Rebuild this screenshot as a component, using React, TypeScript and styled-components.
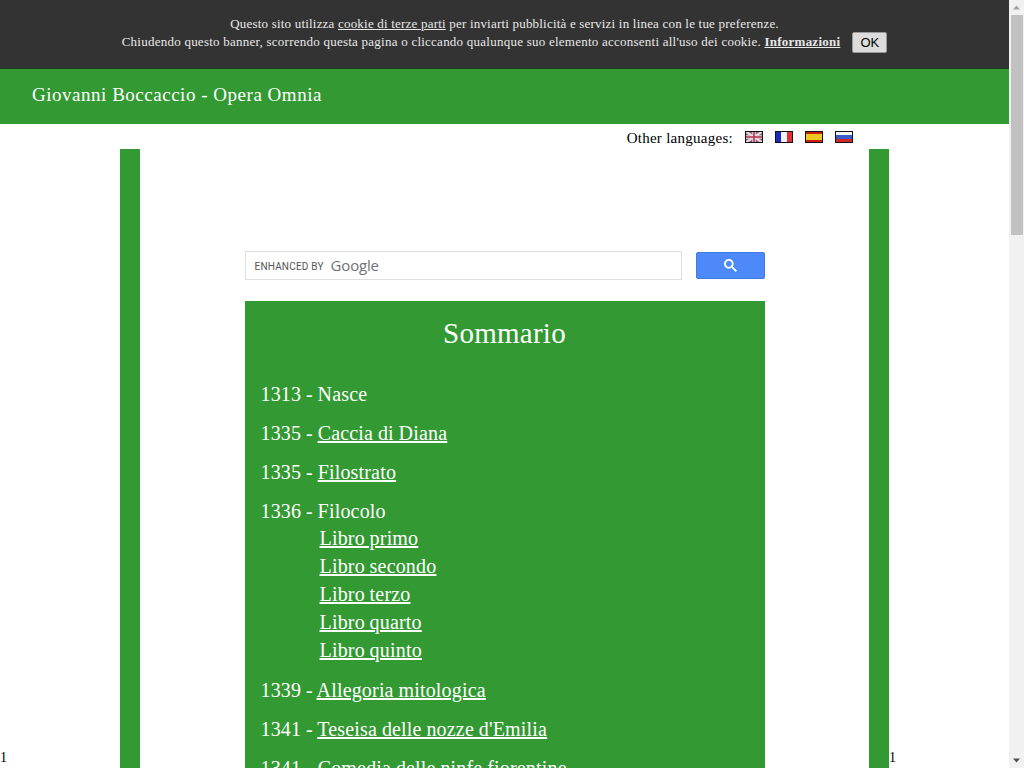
import React from "react";
import styled, { createGlobalStyle } from "styled-components";

const Global = createGlobalStyle`
  html { scrollbar-width: none; }
  body { margin: 0; background: #fff; color: #000; font-family: "Liberation Serif", serif; font-size: 16px; }
`;

const Page = styled.div`
  margin-right: 15px;
`;
const ScrollRail = styled.div`
  position: fixed;
  top: 0;
  right: 0;
  bottom: 0;
  width: 15px;
  background: #f1f1f1;
  display: flex;
  flex-direction: column;
  justify-content: space-between;
`;
const ScrollArrow = styled.svg`
  width: 15px;
  height: 15px;
  display: block;
`;
const ScrollThumb = styled.div`
  position: absolute;
  top: 15px;
  left: 2px;
  width: 12px;
  height: 220px;
  background: #c1c1c1;
`;
const Banner = styled.div`
  height: 54px;
  padding-top: 14px;
  background: #333;
  border-bottom: 1px solid #1d3d1b;
  color: #e8e8e8;
  text-align: center;
  font-size: 13px;
  line-height: 19px;
  letter-spacing: 0.2px;
  a { color: inherit; text-decoration: underline; }
`;
const BannerLine = styled.div`
  margin-top: -1px;
  letter-spacing: 0.24px;
`;
const OkButton = styled.button`
  margin-left: 12px;
  width: 35px;
  height: 21px;
  padding: 0;
  border: 1px solid #999;
  border-radius: 2px;
  background: #dcdcdc;
  color: #000;
  font-family: "Liberation Sans", sans-serif;
  font-size: 13px;
  letter-spacing: 0;
  vertical-align: -1px;
  line-height: 19px;
`;
const Header = styled.header`
  height: 55px;
  background: #339933;
  color: #fff;
  font-size: 19px;
  line-height: 52px;
  letter-spacing: 0.52px;
  padding-left: 32px;
`;
const Languages = styled.div`
  height: 21px;
  padding: 4px 156px 0 0;
  display: flex;
  justify-content: flex-end;
  align-items: center;
  font-size: 15px;
  letter-spacing: 0.27px;
`;
const Flags = styled.span`
  display: flex;
  gap: 12px;
  margin-left: 12px;
  margin-top: -3px;
`;
const Flag = styled.svg`
  width: 18px;
  height: 12px;
  display: block;
  g { filter: blur(0.6px); }
`;
const Columns = styled.div`
  display: flex;
  align-items: flex-start;
`;
const Side = styled.div<{ $width: number }>`
  width: ${(p) => p.$width}px;
  flex: none;
  padding-top: 601px;
  font-size: 14px;
  line-height: 16px;
`;
const Main = styled.main`
  width: 729px;
  flex: none;
  border-left: 20px solid #339933;
  border-right: 20px solid #339933;
  padding: 102px 0 60px;
`;
const Search = styled.form`
  width: 520px;
  margin: 0 auto 22px;
  display: flex;
  justify-content: space-between;
  align-items: center;
  height: 28px;
`;
const SearchBox = styled.div`
  width: 437px;
  height: 29px;
  box-sizing: border-box;
  border: 1px solid #dfdfdf;
  display: flex;
  align-items: center;
  padding-left: 9px;
  gap: 7px;
  background: #fff;
`;
const Enhanced = styled.span`
  font-family: Roboto, sans-serif;
  font-size: 10px;
  color: #555;
  letter-spacing: 0.2px;
  padding-top: 2px;
`;
const GoogleMark = styled.span`
  font-family: "Open Sans", Roboto, sans-serif;
  font-size: 15px;
  color: #6f7377;
  letter-spacing: -0.2px;
`;
const SearchButton = styled.button`
  width: 69px;
  height: 27px;
  padding: 0;
  border: 1px solid #4179e0;
  border-radius: 2px;
  background: #4d89f9;
  display: flex;
  align-items: center;
  justify-content: center;
`;
const Summary = styled.section`
  width: 488px;
  margin: 0 auto;
  padding: 16px 16px 30px;
  background: #339933;
  color: #fff;
  font-size: 20px;
  line-height: 23px;
  letter-spacing: 0.18px;
  word-spacing: -0.4px;
  a { color: inherit; text-decoration: underline; }
`;
const Title = styled.h1`
  margin: 0 0 34px;
  text-align: center;
  font-weight: 400;
  font-size: 29px;
  line-height: 32px;
  letter-spacing: 0.25px;
`;
const Entry = styled.div`
  margin-bottom: 16px;
`;
const SubList = styled.div`
  margin: 1px 0 -1px 59px;
  line-height: 28px;
  a { display: block; width: fit-content; }
`;
const Filler = styled.div`
  height: 875px;
`;

const flags = [
  <g key="uk"><rect width="18" height="12" fill="#8a5a78" /><path d="M0 0 18 12M18 0 0 12" stroke="#ddd" strokeWidth="2.2" /><path d="M9 0V12M0 6H18" stroke="#e4d8dc" strokeWidth="3.5" /><path d="M9 0V12M0 6H18" stroke="#b03050" strokeWidth="1.5" /></g>,
  <g key="fr"><rect width="6" height="12" fill="#1a2ac0" /><rect x="6" width="6" height="12" fill="#f4f4f8" /><rect x="12" width="6" height="12" fill="#e03030" /></g>,
  <g key="es"><rect width="18" height="12" fill="#c81e10" /><rect y="3" width="18" height="6" fill="#eec820" /></g>,
  <g key="ru"><rect width="18" height="4" fill="#f4f4f4" /><rect y="4" width="18" height="4" fill="#3a5ac8" /><rect y="8" width="18" height="4" fill="#d02828" /></g>,
];

const later: [string, string][] = [
  ["1341", "Comedia delle ninfe fiorentine"],
  ["1342", "Amorosa visione"],
  ["1343", "Elegia di Madonna Fiammetta"],
  ["1344", "Ninfale fiesolano"],
  ["1349", "Decameron"],
  ["1355", "Corbaccio"],
  ["1360", "Genealogia deorum gentilium"],
  ["1361", "De mulieribus claris"],
  ["1362", "De casibus virorum illustrium"],
  ["1364", "Trattatello in laude di Dante"],
  ["1370", "Rime"],
  ["1373", "Esposizioni sopra la Comedia"],
  ["1374", "Epistole"],
  ["1375", "Muore"],
];
const books = ["Libro primo", "Libro secondo", "Libro terzo", "Libro quarto", "Libro quinto"];

export default function App() {
  return (
    <>
      <Global />
      <Page>
        <Banner>
          Questo sito utilizza <a href="#">cookie di terze parti</a> per inviarti pubblicità e servizi in linea con le tue preferenze.
          <BannerLine>
            Chiudendo questo banner, scorrendo questa pagina o cliccando qualunque suo elemento acconsenti all'uso dei cookie.{" "}
            <a href="#"><b>Informazioni</b></a>
            <OkButton>OK</OkButton>
          </BannerLine>
        </Banner>
        <Header>Giovanni Boccaccio - Opera Omnia</Header>
        <Languages>
          Other languages:
          <Flags>
            {flags.map((f, i) => (
              <Flag key={i} viewBox="0 0 18 12">
                {f}
                <rect x="0.5" y="0.5" width="17" height="11" fill="none" stroke="#111" />
              </Flag>
            ))}
          </Flags>
        </Languages>
        <Columns>
          <Side $width={120}>1</Side>
          <Main>
            <Search>
              <SearchBox>
                <Enhanced>ENHANCED BY</Enhanced>
                <GoogleMark>Google</GoogleMark>
              </SearchBox>
              <SearchButton type="button" aria-label="search">
                <svg width="13" height="13" viewBox="0 0 13 13">
                  <path fill="#fff" d="m4.8495 7.8226c0.82666 0 1.5262-0.29146 2.0985-0.87438 0.57232-0.58292 0.86378-1.2877 0.87438-2.1144 0.010599-0.82666-0.28086-1.5262-0.87438-2.0985-0.59352-0.57232-1.293-0.86378-2.0985-0.87438-0.8055-0.010599-1.5103 0.28086-2.1144 0.87438-0.60414 0.59352-0.8956 1.293-0.87438 2.0985 0.021197 0.8055 0.31266 1.5103 0.87438 2.1144 0.56172 0.60414 1.2665 0.8956 2.1144 0.87438zm4.4695 0.2115 3.681 3.6819-1.259 1.284-3.6817-3.7 0.0019784-0.69479-0.090043-0.098846c-0.87973 0.76087-1.92 1.1413-3.1207 1.1413-1.3553 0-2.5025-0.46363-3.4417-1.3909s-1.4088-2.0686-1.4088-3.4239c0-1.3553 0.4696-2.4966 1.4088-3.4239 0.9392-0.92727 2.0864-1.3969 3.4417-1.4088 1.3553-0.011889 2.4906 0.45771 3.406 1.4088 0.9154 0.95107 1.379 2.0924 1.3909 3.4239 0 1.2126-0.38043 2.2588-1.1413 3.1385l0.098834 0.090049z" />
                </svg>
              </SearchButton>
            </Search>
            <Summary>
              <Title>Sommario</Title>
              <Entry>1313 - Nasce</Entry>
              <Entry>1335 - <a href="#">Caccia di Diana</a></Entry>
              <Entry>1335 - <a href="#">Filostrato</a></Entry>
              <Entry>
                1336 - Filocolo
                <SubList>
                  {books.map((b) => <a href="#" key={b}>{b}</a>)}
                </SubList>
              </Entry>
              <Entry>1339 - <a href="#">Allegoria mitologica</a></Entry>
              <Entry>1341 - <a href="#">Teseisa delle nozze d'Emilia</a></Entry>
              {later.map(([y, t]) => (
                <Entry key={t}>{y} - <a href="#">{t}</a></Entry>
              ))}
              <Filler />
            </Summary>
          </Main>
          <Side $width={100}>1</Side>
        </Columns>
      </Page>
      <ScrollRail>
        <ScrollArrow viewBox="0 0 15 15"><polygon points="4,9.5 7.5,5.5 11,9.5" fill="#a3a3a3" /></ScrollArrow>
        <ScrollThumb />
        <ScrollArrow viewBox="0 0 15 15"><polygon points="4,5.5 11,5.5 7.5,9.5" fill="#505050" /></ScrollArrow>
      </ScrollRail>
    </>
  );
}
